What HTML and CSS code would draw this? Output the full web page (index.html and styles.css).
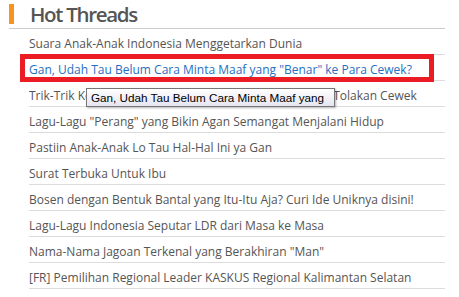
FILE: index.html
```html
<!DOCTYPE html>
<html>
<head>
<meta charset="utf-8">
<link rel="stylesheet" href="styles.css">
</head>
<body>
<div class="panel">
  <h2 class="title">Hot Threads</h2>
  <ul class="list">
    <li class="row">Suara Anak-Anak Indonesia Menggetarkan Dunia</li>
    <li class="row link">Gan, Udah Tau Belum Cara Minta Maaf yang "Benar" ke Para Cewek?</li>
    <li class="row">Trik-Trik Keren Supaya Lo Gak Galau Lagi Menghadapi Tolakan Cewek</li>
    <li class="row">Lagu-Lagu "Perang" yang Bikin Agan Semangat Menjalani Hidup</li>
    <li class="row">Pastiin Anak-Anak Lo Tau Hal-Hal Ini ya Gan</li>
    <li class="row">Surat Terbuka Untuk Ibu</li>
    <li class="row">Bosen dengan Bentuk Bantal yang Itu-Itu Aja? Curi Ide Uniknya disini!</li>
    <li class="row">Lagu-Lagu Indonesia Seputar LDR dari Masa ke Masa</li>
    <li class="row">Nama-Nama Jagoan Terkenal yang Berakhiran "Man"</li>
    <li class="row">[FR] Pemilihan Regional Leader KASKUS Regional Kalimantan Selatan</li>
  </ul>
  <div class="highlight"></div>
  <div class="tooltip">Gan, Udah Tau Belum Cara Minta Maaf yang</div>
</div>
</body>
</html>
```
FILE: styles.css
```css
html, body {
  margin: 0;
  padding: 0;
  background: #fff;
}
.panel {
  position: relative;
  width: 436px;
  margin-left: 9px;
  font-family: "Open Sans", sans-serif;
}
.title {
  display: flex;
  align-items: flex-start;
  margin: 0;
  padding-top: 4px;
  height: 24px;
  border-bottom: 1px solid #cccccc;
  font-size: 20.5px;
  font-weight: 600;
  letter-spacing: -1.3px;
  color: #555555;
  line-height: 21px;
}
.title::before {
  content: "";
  width: 5px;
  height: 20px;
  background: #f7941d;
  margin-right: 16px;
}
.list {
  list-style: none;
  margin: 0;
  padding: 0 0 0 20px;
}
.row {
  height: 25px;
  line-height: 30px;
  border-bottom: 1px solid #dcdcdc;
  font-size: 12px;
  color: #555555;
  white-space: nowrap;
  overflow: hidden;
}
.row.link {
  color: #1f70c1;
}
.highlight {
  position: absolute;
  left: 11px;
  top: 54px;
  width: 404px;
  height: 18px;
  border: 5px solid #ec1c24;
}
.tooltip {
  position: absolute;
  left: 77px;
  top: 88px;
  width: 243px;
  height: 17px;
  padding-left: 4px;
  border: 1px solid #767676;
  background: linear-gradient(#ffffff, #e4e5f0);
  font-family: "Liberation Sans", sans-serif;
  font-size: 11.7px;
  line-height: 18px;
  color: #000;
  white-space: nowrap;
  overflow: hidden;
  box-shadow: 1px 1px 2px rgba(0,0,0,0.3);
}
```
